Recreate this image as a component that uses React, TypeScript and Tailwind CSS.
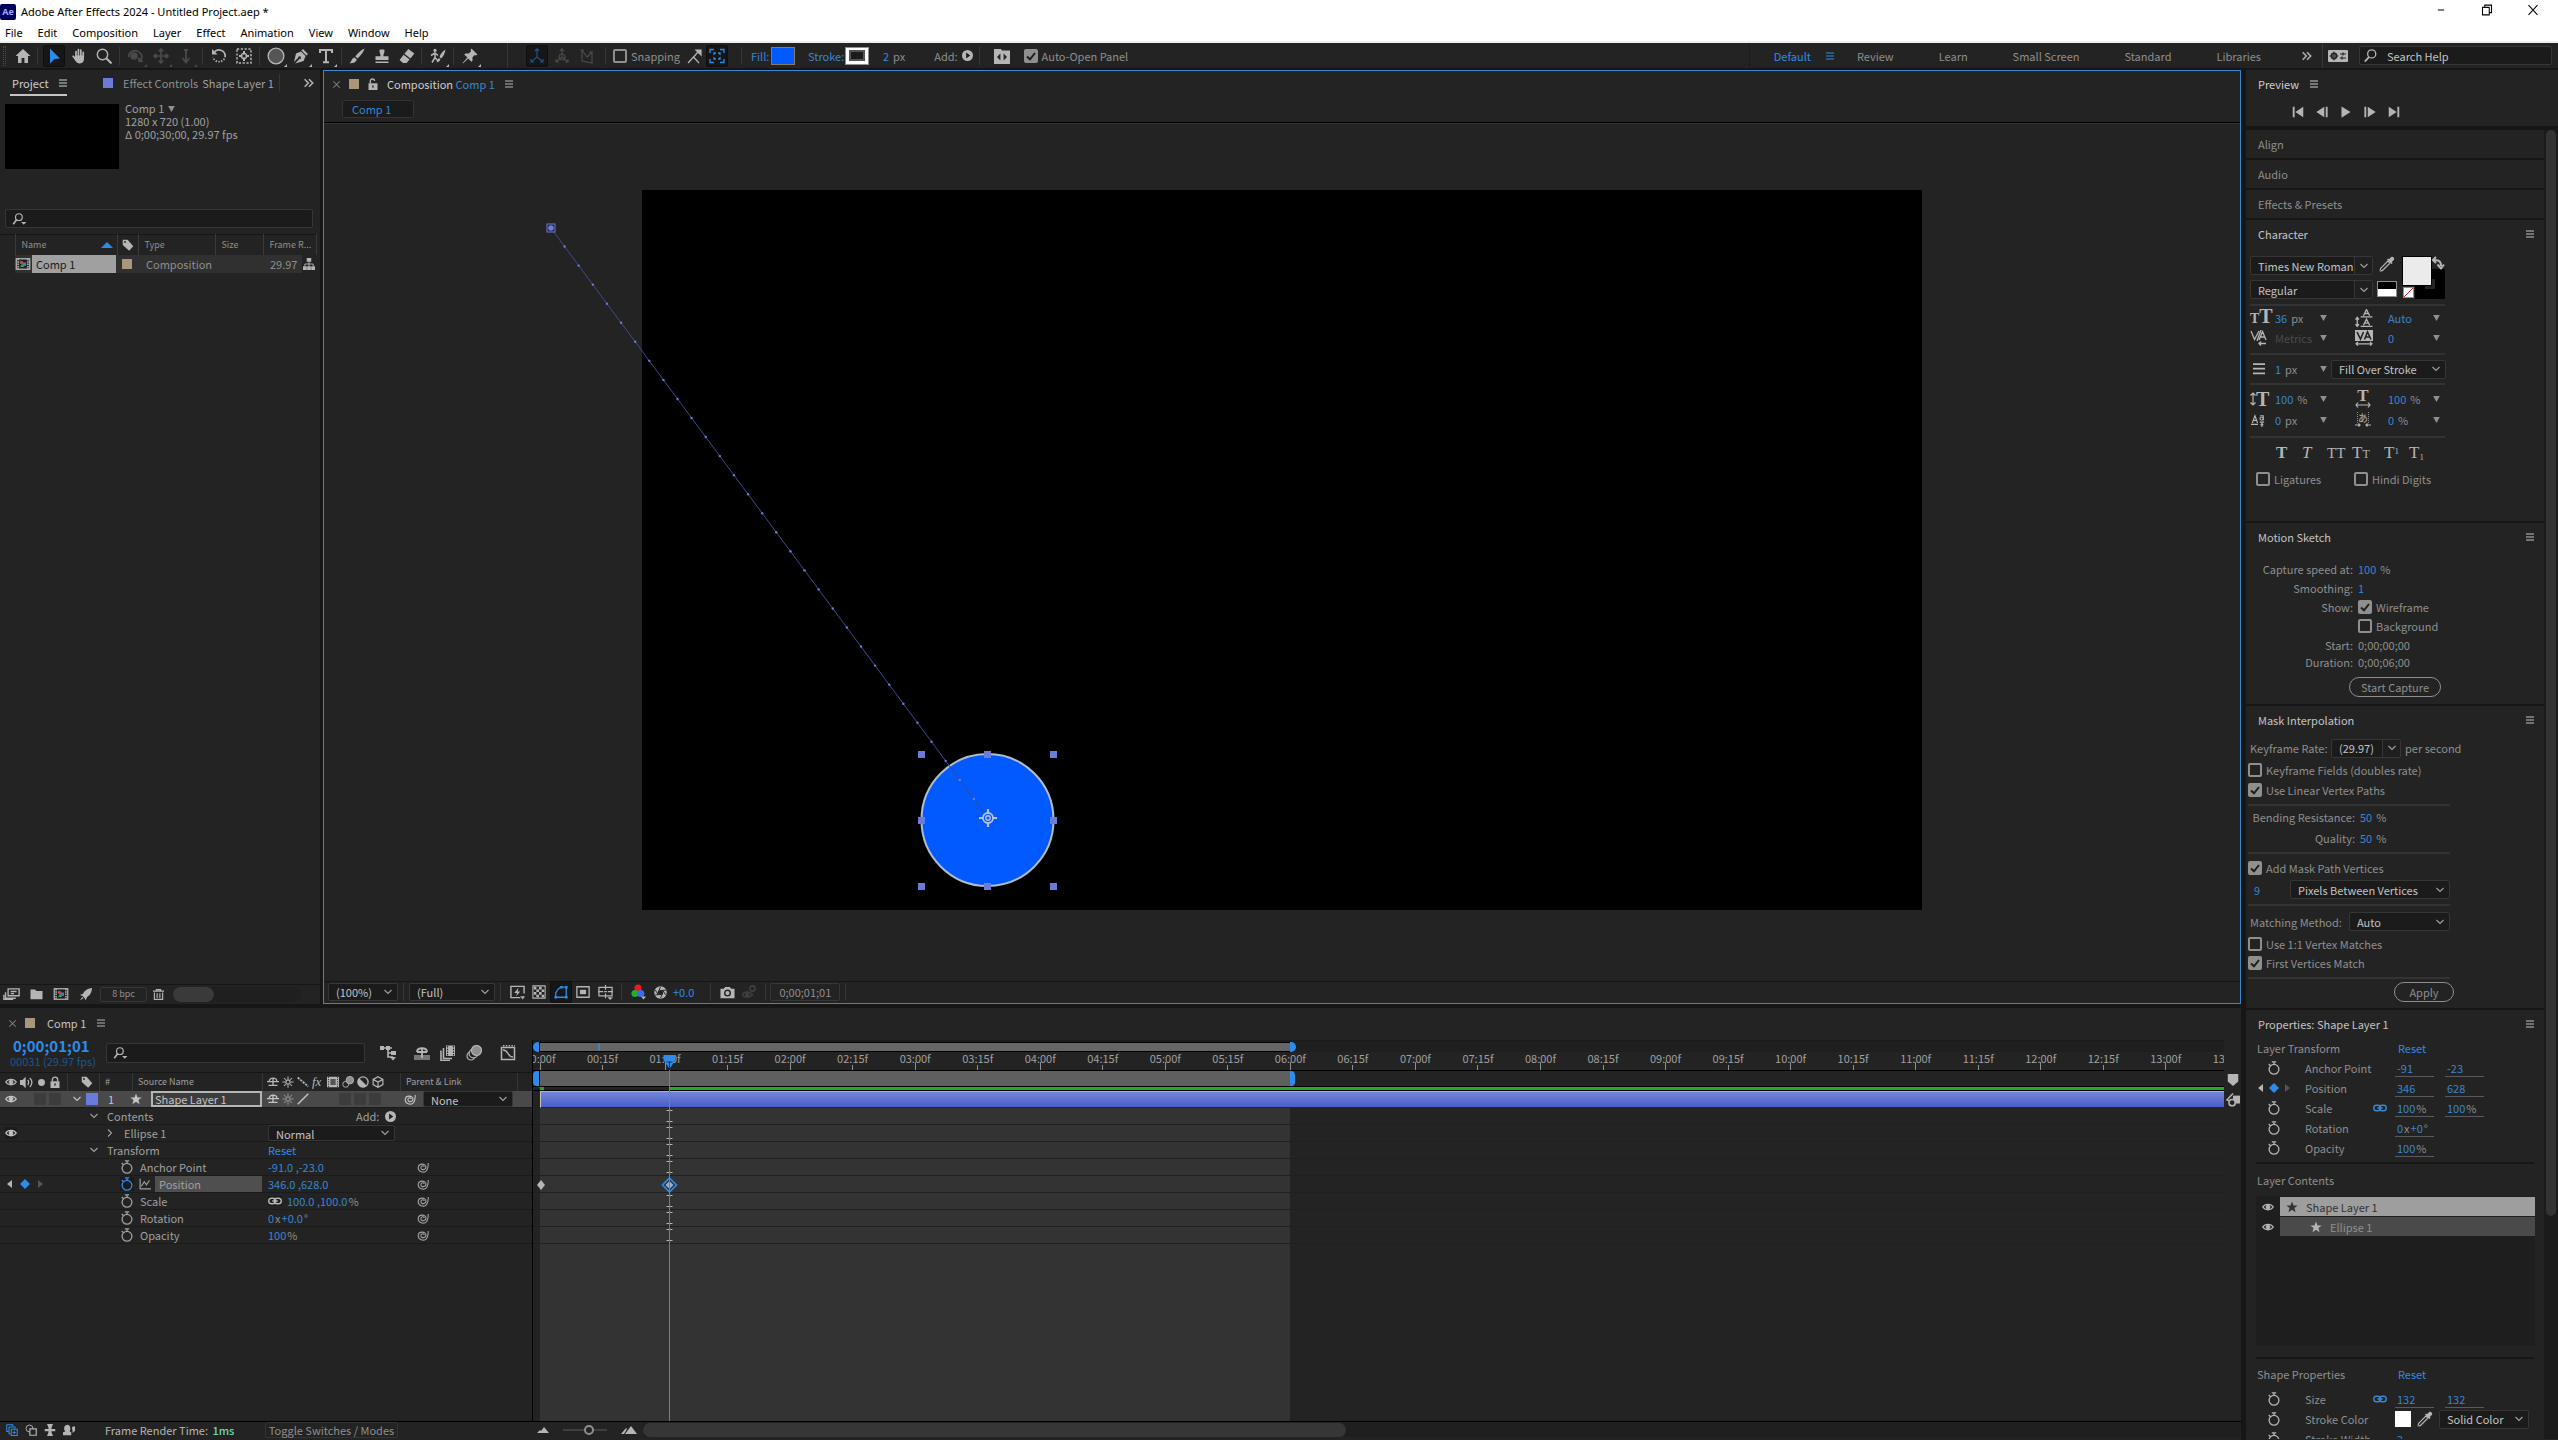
import type { ReactNode } from 'react';

const SECOND = 125.06;
const ORIGIN = 7;
const PLAYHEAD = ORIGIN + SECOND * (31 / 30);

function Svg({ className = 'size-4', box = '0 0 16 16', children }: { className?: string; box?: string; children: ReactNode }) {
  return (
    <svg
      viewBox={box}
      className={`shrink-0 ${className}`}
      fill="none"
      stroke="currentColor"
      strokeWidth="1.2"
      aria-hidden="true"
    >
      {children}
    </svg>
  );
}

function MenuIcon() {
  return (
    <Svg className="size-2">
      <path d="M0 2H16M0 8H16M0 14H16" strokeWidth="2" />
    </Svg>
  );
}

function Chevron({ className = 'size-2' }: { className?: string }) {
  return (
    <Svg className={className}>
      <path d="M1 4L8 11L15 4" strokeWidth="2.2" />
    </Svg>
  );
}

function Stopwatch({ className = 'size-[14px]' }: { className?: string }) {
  return (
    <Svg className={className}>
      <circle cx="8" cy="9.5" r="5.6" strokeWidth="1.5" />
      <path d="M5.5 1H10.5M8 1V4M2 3.5L4 5.5" strokeWidth="1.5" />
    </Svg>
  );
}

function PickWhip() {
  return (
    <Svg className="size-3">
      <path d="M9.5 8C9.5 5.6 5.2 5.8 5.2 9C5.2 12.6 11.8 12.4 12 8C12 3 2 2.6 1.6 9C1.6 14.4 8.6 16.4 12 13.4C14.6 11 15 8 15 2.5" strokeWidth="1.5" />
    </Svg>
  );
}

function Eye() {
  return (
    <Svg className="h-3 w-3">
      <path d="M1 8C4 3.2 12 3.2 15 8C12 12.8 4 12.8 1 8Z" strokeWidth="1.8" />
      <circle cx="8" cy="8" r="2.6" fill="currentColor" />
    </Svg>
  );
}

function Star({ className = 'size-3' }: { className?: string }) {
  return (
    <Svg className={className}>
      <path d="M8 0.5L10 6H15.6L11.2 9.4L12.8 15L8 11.6L3.2 15L4.8 9.4L0.4 6H6Z" fill="currentColor" stroke="none" />
    </Svg>
  );
}

function Tag() {
  return (
    <Svg className="size-3">
      <path d="M1 1H7.5L15 9.5L9.5 15.5L1 8Z" fill="currentColor" stroke="none" />
      <circle cx="4" cy="4" r="1.2" fill="#232323" stroke="none" />
    </Svg>
  );
}

function CompIcon() {
  return (
    <Svg className="h-3 w-4" box="0 0 20 16">
      <rect x="1" y="1" width="18" height="14" stroke="#b8b8b8" strokeWidth="1.6" />
      <path d="M3.5 1V15M16.5 1V15" stroke="#b8b8b8" strokeWidth="2" strokeDasharray="2 1.2" />
      <rect x="5.5" y="3" width="9" height="10" fill="#1d1d1d" stroke="none" />
      <circle cx="8" cy="6" r="2.3" fill="#d0433f" stroke="none" />
      <rect x="9.5" y="6" width="4.5" height="4.5" fill="#3f7fd0" stroke="none" />
      <path d="M6 12L8.8 7.6L11.5 12Z" fill="#3fa05c" stroke="none" />
    </Svg>
  );
}

function Link() {
  return (
    <Svg className="h-[10px] w-[14px]" box="0 0 20 12">
      <rect x="1" y="2" width="10" height="8" rx="4" strokeWidth="2" />
      <rect x="9" y="2" width="10" height="8" rx="4" strokeWidth="2" />
      <path d="M6 6H14" strokeWidth="2" />
    </Svg>
  );
}

function SearchIcon() {
  return (
    <Svg className="h-3 w-4" box="0 0 20 16">
      <circle cx="8.5" cy="5.5" r="4.5" strokeWidth="1.6" />
      <path d="M5.4 9L1 15" strokeWidth="2.2" />
      <path d="M11.5 12H18.5L15 15.5Z" fill="currentColor" stroke="none" />
    </Svg>
  );
}

function AddIcon() {
  return (
    <Svg className="size-[11px]">
      <circle cx="8" cy="8" r="8" fill="#b5b5b5" stroke="none" />
      <path d="M6 3.5L12 8L6 12.5Z" fill="#1d1d1d" stroke="none" />
    </Svg>
  );
}

function Eyedropper() {
  return (
    <Svg>
      <path d="M9.5 5.5L11 7L4 14C3 15 1 15 1.2 14.8C1 15 1.4 12.5 2.2 11.8L8.8 5Z" />
      <path d="M8 3.5L12.5 8L13.6 6.9L12.8 6L15 3.8C16 2.4 13.8 0 12.2 1L10 3.2L9.2 2.4Z" fill="currentColor" stroke="none" />
    </Svg>
  );
}

function Sep({ className = '' }: { className?: string }) {
  return <span className={`h-[18px] w-px shrink-0 bg-[#363636] ${className}`} />;
}

function Caret() {
  return (
    <Svg className="h-1.5 w-[7px]" box="0 0 10 9">
      <path d="M0 0H10L5 9Z" fill="#8f8f8f" stroke="none" />
    </Svg>
  );
}

function Check({ label, checked = false, className = '' }: { label: string; checked?: boolean; className?: string }) {
  return (
    <label className={`flex h-4 items-center gap-1 whitespace-nowrap ${className}`}>
      <span className="relative size-3.5 shrink-0">
        <input
          type="checkbox"
          defaultChecked={checked}
          className="peer block size-3.5 appearance-none rounded-[2px] border-2 border-[#8f8f8f] checked:bg-[#8f8f8f]"
        />
        <svg viewBox="0 0 14 14" className="pointer-events-none absolute inset-0 hidden peer-checked:block" aria-hidden="true">
          <path d="M3 7.5L6 10.3L11 4" fill="none" stroke="#1d1d1d" strokeWidth="2" />
        </svg>
      </span>
      {label}
    </label>
  );
}

function Select({ value, label, className = 'h-[19px]', split = false }: { value: string; label: string; className?: string; split?: boolean }) {
  return (
    <span className={`relative block shrink-0 ${className}`}>
      <select
        aria-label={label}
        className="block h-full w-full appearance-none rounded-[2px] border border-[#363636] bg-[#1b1b1b] pl-[7px] text-[#c4c4c4]"
      >
        <option>{value}</option>
      </select>
      <span
        className={`pointer-events-none absolute inset-y-px right-px flex w-[18px] items-center justify-center text-[#a0a0a0] ${
          split ? 'border-l border-[#363636] bg-[#1f1f1f]' : ''
        }`}
      >
        <Chevron />
      </span>
    </span>
  );
}

type ToolProps = {
  name: string;
  children: ReactNode;
  active?: boolean;
  dim?: boolean;
  corner?: boolean;
  width?: string;
};

function Tool({ name, children, active = false, dim = false, corner = false, width = 'w-[25px]' }: ToolProps) {
  return (
    <span className={`flex shrink-0 justify-center ${width}`}>
      <button
        aria-label={name}
        className={`relative flex h-[22px] w-[22px] items-center justify-center rounded-[2px] ${
          active ? 'border border-[#0f0f0f] bg-[#161616] text-[#2d8ceb]' : dim ? 'text-[#4a4a4a]' : 'text-[#b5b5b5]'
        }`}
      >
        {children}
        {corner && (
          <svg viewBox="0 0 4 4" className="absolute right-0 bottom-0 size-[3px]" aria-hidden="true">
            <path d="M4 0V4H0Z" fill="currentColor" />
          </svg>
        )}
      </button>
    </span>
  );
}

function TitleBar() {
  const menus = ['File', 'Edit', 'Composition', 'Layer', 'Effect', 'Animation', 'View', 'Window', 'Help'];

  return (
    <header className="shrink-0 bg-white font-['Noto_Sans'] text-[11px] text-black">
      <div className="flex h-6 items-center">
        <span className="flex size-4 items-center justify-center rounded-[2px] bg-[#00005b] text-[9px] font-bold text-[#a6a6ff]">
          Ae
        </span>
        <h1 className="ml-[5px]">Adobe After Effects 2024 - Untitled Project.aep *</h1>
        <div className="ml-auto flex items-center gap-[30px] pr-[17px] pb-1">
          <button aria-label="Minimize">
            <Svg className="h-2.5 w-4">
              <path d="M3 8H13" strokeWidth="1.6" />
            </Svg>
          </button>
          <button aria-label="Restore">
            <Svg className="h-3 w-4">
              <path d="M2 4.5H11V14.5H2ZM5 4.5V1.5H14V11.5H11" strokeWidth="1.4" />
            </Svg>
          </button>
          <button aria-label="Close">
            <Svg className="h-3 w-4">
              <path d="M2 1.5L14 14.5M14 1.5L2 14.5" strokeWidth="1.4" />
            </Svg>
          </button>
        </div>
      </div>
      <nav className="flex h-[19px] items-center gap-[15px] border-b-2 border-[#eef0ee] px-[5px]">
        {menus.map((item) => (
          <button key={item}>{item}</button>
        ))}
      </nav>
    </header>
  );
}

function ToolBar() {
  return (
    <div className="flex h-[25px] shrink-0 items-center bg-[#232323]">
      <span className="ml-[3px] h-5 w-[3px] border-x border-dotted border-[#4a4a4a]" />
      <span className="ml-1 flex">
        <Tool name="Home">
          <Svg>
            <path d="M8 1L0.5 8H3V15H6.6V10H9.4V15H13V8H15.5Z" fill="currentColor" stroke="none" />
          </Svg>
        </Tool>
      </span>
      <Sep className="ml-0.5" />
      <span className="flex px-[3px]">
        <Tool name="Selection" active>
          <Svg>
            <path d="M4 0.5L14 10.5L8.6 11L4 15.5Z" fill="currentColor" stroke="none" />
          </Svg>
        </Tool>
        <Tool name="Hand">
          <Svg>
            <path d="M5 9V3.6M7.4 8V1.6M9.8 8V2M12.2 9V4.4" strokeWidth="1.7" strokeLinecap="round" />
            <path d="M4.1 7.5H13V11C13 13.6 11.4 15.4 8.8 15.4C6.4 15.4 5.2 14.2 4 12.2L1 8C1.8 6.8 3.2 7.6 4.1 9Z" fill="currentColor" stroke="none" />
          </Svg>
        </Tool>
        <Tool name="Zoom">
          <Svg>
            <circle cx="6.5" cy="6.5" r="5.2" strokeWidth="1.4" />
            <path d="M10.5 10.5L15.5 15.5" strokeWidth="2" />
          </Svg>
        </Tool>
      </span>
      <Sep />
      <span className="flex px-[3px]">
        <Tool name="Orbit" dim corner>
          <Svg>
            <circle cx="6" cy="8" r="3.2" fill="currentColor" />
            <path d="M1 9C-0.5 5 6 1 10 3.4C15 6 15 11 11 13.5M11 13.5L11 9.5M11 13.5L15 13" strokeWidth="1.6" />
          </Svg>
        </Tool>
        <Tool name="Pan" dim corner>
          <Svg>
            <path d="M8 2V14M2 8H14M5.8 3.5L8 1L10.2 3.5M5.8 12.5L8 15L10.2 12.5M3.5 5.8L1 8L3.5 10.2M12.5 5.8L15 8L12.5 10.2" strokeWidth="1.6" />
          </Svg>
        </Tool>
        <Tool name="Dolly" dim corner>
          <Svg>
            <path d="M8 1V13M4.5 10L8 14.5L11.5 10M6 2H10" strokeWidth="1.8" />
          </Svg>
        </Tool>
      </span>
      <Sep className="ml-px" />
      <span className="flex px-[3px]">
        <Tool name="Rotation">
          <Svg>
            <path d="M3 4.5A6.2 6.2 0 0 1 14.2 8" strokeWidth="1.7" />
            <path d="M14.2 8A6.2 6.2 0 0 1 2 9" strokeWidth="1.7" strokeDasharray="1.4 1.4" />
            <path d="M1 1V6.5H6.5Z" fill="currentColor" stroke="none" />
          </Svg>
        </Tool>
        <Tool name="Pan Behind">
          <Svg>
            <rect x="1" y="1" width="14" height="14" strokeWidth="1.5" strokeDasharray="2.2 1.6" />
            <path d="M8 3V13M3 8H13" strokeWidth="2" strokeDasharray="3.4 3.2" />
            <circle cx="8" cy="8" r="2.6" />
          </Svg>
        </Tool>
      </span>
      <Sep />
      <span className="flex px-[3px]">
        <Tool name="Ellipse" corner>
          <Svg className="size-[18px]">
            <circle cx="8" cy="8" r="7" fill="#555555" />
          </Svg>
        </Tool>
        <Tool name="Pen" corner>
          <Svg>
            <path d="M10 1L15 6L13.4 7.6L8.4 2.6ZM8 3.4L12.6 8L10.6 13L2.2 15.4L6.4 11A1.4 1.4 0 1 0 5.2 9.8L1 14L3 5.4Z" fill="currentColor" stroke="none" />
          </Svg>
        </Tool>
        <Tool name="Type" corner>
          <Svg>
            <path d="M2 5V2H14V5M8 2V14M5 14.2H11" strokeWidth="2" />
          </Svg>
        </Tool>
      </span>
      <Sep />
      <span className="flex px-0.5">
        <Tool name="Brush">
          <Svg>
            <path d="M15.5 0.5C12 2 8 6 6.4 8.6L8.6 10.4C11 8 14.6 4.4 15.5 0.5Z" fill="currentColor" stroke="none" />
            <path d="M5.6 9.4L7.8 11.4C7.4 14 4.4 15.6 0.5 15.2C2.6 14 2.4 10 5.6 9.4Z" fill="currentColor" stroke="none" />
          </Svg>
        </Tool>
        <Tool name="Clone Stamp">
          <Svg>
            <path d="M6 1.5H10C11.5 3.5 9.4 5.4 9.4 8.2H14.5V12H1.5V8.2H6.6C6.6 5.4 4.5 3.5 6 1.5ZM1.5 13.4H14.5V15H1.5Z" fill="currentColor" stroke="none" />
          </Svg>
        </Tool>
        <Tool name="Eraser">
          <Svg>
            <path d="M9.4 1L15.4 5.6L11.4 10.4L5.4 5.8ZM4.6 6.8L10.6 11.4L7.6 15H4L0.6 12Z" fill="currentColor" stroke="none" />
          </Svg>
        </Tool>
      </span>
      <Sep />
      <span className="flex px-[3px]">
        <Tool name="Roto Brush" corner>
          <Svg>
            <circle cx="5" cy="2.4" r="1.6" fill="currentColor" stroke="none" />
            <path d="M5 4.5V9.5L2 14.5M5 9.5L8 13M1 7.5L5 5L8 7.5" strokeWidth="1.5" />
            <path d="M15.5 1.5C12.5 3 10.5 6 9.5 9L11 10.5C13.5 8.5 15 5 15.5 1.5ZM9 10L10.4 11.6C9.6 13.6 8 14.4 6.4 14.2C7.8 13 7.6 10.6 9 10Z" fill="currentColor" stroke="none" />
          </Svg>
        </Tool>
      </span>
      <Sep />
      <span className="flex px-[3px]">
        <Tool name="Puppet Pin" corner>
          <Svg>
            <path d="M9.4 0.5L15.5 6.6L13.8 7.4L12.6 7L10.4 9.4L10.6 12.6L9.4 13.8L6.2 10.4L1 15.4L0.6 15L5.4 9.6L2.2 6.6L3.4 5.4L6.6 5.6L9 3.4L8.6 2.2Z" fill="currentColor" stroke="none" />
          </Svg>
        </Tool>
      </span>
      <Sep className="ml-[22px] h-[25px] bg-[#1b1b1b]" />
      <span className="ml-4 flex">
        <Tool name="Local Axis" active>
          <Svg className="size-4 text-[#1d5288]">
            <path d="M8 1V9L2 14M8 9L14 14M6 3L8 0.8L10 3M2 11V14H5M14 11V14H11" />
          </Svg>
        </Tool>
        <Tool name="World Axis" dim>
          <Svg>
            <path d="M8 1V9L2 14M8 9L14 14M6 3L8 0.8L10 3M2 11V14H5M14 11V14H11" />
            <circle cx="8" cy="9" r="3" />
          </Svg>
        </Tool>
        <Tool name="View Axis" dim>
          <Svg>
            <path d="M3 2V13L13 15V4L8 9L3 2M13 4L10 4M1 2H5" />
          </Svg>
        </Tool>
      </span>
      <Sep className="ml-1.5" />
      <Check label="Snapping" className="ml-[7px] w-[66px]" />
      <span className="ml-[7px] flex text-[#b5b5b5]">
        <Svg>
          <path d="M2 15L7.5 9L13 15M7.5 9L12 4" />
          <path d="M10 2H15V7Z" fill="currentColor" />
        </Svg>
      </span>
      <span className="ml-0.5 flex">
        <Tool name="Snap Features" active>
          <Svg>
            <path d="M1 5V1.5H5M11 1.5H15V5M15 11V14.5H11M5 14.5H1V11M5 7V5H7M9 5H11V7M11 9V11H9M7 11H5V9" strokeWidth="1.3" />
          </Svg>
        </Tool>
      </span>
      <Sep className="ml-3" />
      <button className="ml-[9px] w-5 text-left text-[#3a86cf]">Fill:</button>
      <span className="h-[18px] w-6 border border-[#8a7a60] bg-[#005aff]" />
      <button className="ml-[13px] w-[37px] text-left text-[#3a86cf]">Stroke:</button>
      <span className="flex h-[18px] w-6 items-center justify-center border border-[#8f8f8f] bg-white">
        <span className="h-[11px] w-4 border-2 border-[#555555] bg-[#1b1b1b]" />
      </span>
      <button className="ml-3.5 text-[#2d8ceb]">2</button>
      <span className="ml-1">px</span>
      <span className="ml-[29px] mr-1">Add:</span>
      <button aria-label="Add shape item">
        <AddIcon />
      </button>
      <Sep className="ml-1.5" />
      <button aria-label="Toggle panel" className="ml-3.5 text-[#b5b5b5]">
        <Svg>
          <path d="M0 1H7L8 2.5H16V16H0Z" fill="currentColor" stroke="none" />
          <path d="M6.4 5.5V12.5L3 9ZM9.6 5.5V12.5L13 9Z" fill="#232323" stroke="none" />
        </Svg>
      </button>
      <Check label="Auto-Open Panel" checked className="ml-3.5" />
      <nav className="ml-auto flex h-full items-center border-l border-[#1b1b1b] pl-6">
        <button className="text-[#2d8ceb]">Default</button>
        <button aria-label="Workspace menu" className="mx-[15px] text-[#2d8ceb]">
          <MenuIcon />
        </button>
        <span className="ml-2 flex gap-[45px]">
          <button>Review</button>
          <button>Learn</button>
          <button>Small Screen</button>
          <button>Standard</button>
          <button>Libraries</button>
        </span>
        <button aria-label="More workspaces" className="ml-[41px] text-[#b5b5b5]">
          <Svg className="size-2.5">
            <path d="M1 2L7 8L1 14M8 2L14 8L8 14" strokeWidth="2.4" />
          </Svg>
        </button>
      </nav>
      <Sep className="ml-2.5 h-[25px]" />
      <button aria-label="Workspace settings" className="ml-[5px] text-[#b5b5b5]">
        <Svg className="h-3 w-5" box="0 0 20 12">
          <rect width="20" height="12" rx="1" fill="currentColor" stroke="none" />
          <circle cx="6" cy="6" r="2.6" stroke="#232323" strokeWidth="1.6" />
          <path d="M6 1.6V10.4M1.6 6H10.4" stroke="#232323" strokeWidth="1" />
          <path d="M12 4H18M12 8H18M15 2.6V5.4M14 6.6V9.4" stroke="#232323" />
        </Svg>
      </button>
      <label className="mr-1.5 ml-[11px] flex h-[19px] w-[193px] items-center gap-2.5 rounded-[2px] border border-[#363636] bg-[#1b1b1b] pl-1 text-[#b5b5b5]">
        <Svg className="size-[13px]">
          <circle cx="9.5" cy="6" r="5" strokeWidth="1.6" />
          <path d="M6 10L1 15.5" strokeWidth="2.2" />
        </Svg>
        <input aria-label="Search Help" placeholder="Search Help" className="w-full bg-transparent placeholder:text-[#c4c4c4]" />
      </label>
    </div>
  );
}

function ProjectPanel() {
  return (
    <section className="flex w-[320px] shrink-0 flex-col bg-[#232323]">
      <div className="flex h-[26px] shrink-0 items-center pl-[10px]">
        <button className="flex h-full w-[57px] items-center justify-between border-b-2 border-[#c4c4c4] pt-0.5 pl-0.5 text-[#d0d0d0]">
          Project
          <MenuIcon />
        </button>
        <button className="ml-9 flex items-center">
          <span className="mr-2.5 size-2.5 bg-[#6a7bdc]" />
          Effect Controls <span className="ml-1 text-[#a0a0a0]">Shape Layer 1</span>
        </button>
        <Sep className="ml-auto bg-[#1b1b1b]" />
        <button aria-label="More panels" className="mr-[6px] ml-6 text-[#b5b5b5]">
          <Svg className="size-2.5">
            <path d="M1 2L7 8L1 14M8 2L14 8L8 14" strokeWidth="2.4" />
          </Svg>
        </button>
      </div>
      <div className="mt-2 flex gap-1.5 pl-[5px]">
        <span className="h-[65px] w-[114px] bg-black" />
        <div className="-mt-0.5 leading-[13px] text-[#a0a0a0]">
          <button className="flex items-center gap-1 leading-[13px]">
            Comp 1 <Caret />
          </button>
          <p>1280 x 720 (1.00)</p>
          <p>Δ 0;00;30;00, 29.97 fps</p>
        </div>
      </div>
      <label className="mx-[5px] mt-10 flex h-[19px] w-[308px] shrink-0 items-center rounded-[2px] border border-[#363636] bg-[#1b1b1b] pl-1.5 text-[#b5b5b5]">
        <SearchIcon />
        <input aria-label="Search project" className="w-full bg-transparent pl-1" />
      </label>
      <table className="mt-1.5 w-[316px] table-fixed border-t border-[#161616]">
        <thead>
          <tr className="h-5 text-left text-[9px] leading-5 whitespace-nowrap">
            <th className="w-[15px]" />
            <th className="w-[102px] border-l border-[#3a3a3a] pl-1.5 font-normal">
              <span className="flex items-center justify-between pr-1">
                Name
                <Svg className="h-1.5 w-3" box="0 0 12 6">
                  <path d="M6 0L12 6H0Z" fill="#2d8ceb" stroke="none" />
                </Svg>
              </span>
            </th>
            <th className="w-[21px] border-l border-[#3a3a3a] pl-1 text-[#b5b5b5]">
              <Tag />
            </th>
            <th className="w-[77px] border-l border-[#3a3a3a] pl-1.5 font-normal">Type</th>
            <th className="w-[48px] border-l border-[#3a3a3a] pl-1.5 font-normal">Size</th>
            <th className="w-[53px] border-x border-[#3a3a3a] pl-1.5 font-normal">Frame R...</th>
          </tr>
        </thead>
        <tbody>
          <tr className="h-[18px] bg-[#303030] leading-[18px]">
            <td className="bg-[#232323]" />
            <td>
              <span className="flex items-center gap-px">
                <CompIcon />
                <span className="mr-px h-[18px] flex-1 bg-[#a0a0a0] pl-1 text-[#1b1b1b]">Comp 1</span>
              </span>
            </td>
            <td className="pl-[5px]">
              <span className="block size-2.5 bg-[#a8977a]" />
            </td>
            <td colSpan={2} className="pl-2">Composition</td>
            <td className="pl-[7px]">
              <span className="flex items-center justify-between">
                29.97
                <span className="bg-[#232323] px-px text-[#b5b5b5]">
                  <Svg className="h-[18px] w-3">
                    <path d="M5 0H11V5H5ZM0 11H5V16H0ZM11 11H16V16H11ZM5.5 11H10.5V16H5.5Z" fill="currentColor" stroke="none" />
                    <path d="M8 5V11M2.5 11V8H13.5V11" />
                  </Svg>
                </span>
              </span>
            </td>
          </tr>
        </tbody>
      </table>
      <div className="mt-auto mb-px flex h-[19px] shrink-0 items-center border-t border-[#161616] pl-[3px] text-[#b5b5b5]">
        <button aria-label="Interpret footage" className="w-[27px]">
          <Svg className="h-3 w-[17px]" box="0 0 20 14">
            <path d="M6 1H19V9H6ZM9 4H16M9 6.5H13M3 5V12H15M1 8V13.5H12" strokeWidth="1.6" />
          </Svg>
        </button>
        <button aria-label="New folder" className="w-[23px]">
          <Svg className="h-3 w-[13px]">
            <path d="M0 2H6L8 4H16V15H0Z" fill="currentColor" stroke="none" />
          </Svg>
        </button>
        <button aria-label="New composition" className="w-[26px]">
          <CompIcon />
        </button>
        <button aria-label="Project settings" className="w-[21px]">
          <Svg className="size-[13px]">
            <path d="M16 0C10 1 7 3 5 7L1 8.5L4 9.5L7 12.5L8 15.5L10 11C13.5 9 15.5 6 16 0ZM4 11L1 15L5.5 12.5Z" fill="currentColor" stroke="none" />
          </Svg>
        </button>
        <button className="h-[15px] w-[47px] rounded-[2px] border border-[#363636] text-[9px] leading-3 text-[#8f8f8f]">8 bpc</button>
        <button aria-label="Delete" className="ml-[6px]">
          <Svg className="h-[13px] w-[11px]">
            <path d="M0 3H16M5 3V1H11V3M2 5V15H14V5M6 6V13M10 6V13" strokeWidth="1.7" />
          </Svg>
        </button>
        <span className="ml-[9px] h-[15px] w-[128px] rounded-full bg-[#1f1f1f]">
          <span className="block h-[15px] w-[41px] rounded-full bg-[#3a3a3a]" />
        </span>
      </div>
    </section>
  );
}

function CompositionCanvas() {
  const start = { x: -91.5, y: 37.5 };
  const end = { x: 346, y: 628 };
  const frames = Array.from({ length: 30 }, (_, i) => (i + 1) / 31);
  const handles = [
    [279, 565], [345, 565], [411, 565],
    [279, 631], [411, 631],
    [279, 697], [345, 697], [411, 697],
  ];

  return (
    <div className="flex min-h-0 flex-1 items-center justify-center overflow-hidden border-t border-[#333333] pb-1.5">
      <svg viewBox="0 0 1280 720" className="h-[720px] w-[1280px] shrink-0 overflow-visible bg-black">
        <circle cx="345.5" cy="630" r="66" fill="#005aff" stroke="#b4bccc" strokeWidth="2" />
        <line x1={start.x} y1={start.y} x2={end.x} y2={end.y} stroke="#3d4890" strokeWidth="1" />
        {frames.map((t) => (
          <circle key={t} cx={start.x + (end.x - start.x) * t} cy={start.y + (end.y - start.y) * t} r="1.2" fill="#6a7bdc" />
        ))}
        <rect x="-95" y="34" width="8" height="8" fill="#232323" stroke="#6a7bdc" />
        <circle cx="-91" cy="38" r="2.8" fill="#6a7bdc" />
        {handles.map(([x, y]) => (
          <rect key={`${x}-${y}`} x={x - 3} y={y - 4} width="7" height="7" fill="#6a7bdc" />
        ))}
        <g stroke="#b8c0e8" fill="none">
          <circle cx="346" cy="628" r="5" strokeWidth="1.8" />
          <circle cx="346" cy="628" r="2.2" strokeWidth="1.4" />
          <path d="M346 619V623M346 633V637M337 628H341M351 628H355" strokeWidth="2.2" />
        </g>
      </svg>
    </div>
  );
}

function CompositionPanel() {
  return (
    <section className="flex min-w-0 flex-1 flex-col border border-[#3a86cf] bg-[#232323]">
      <div className="flex h-[26px] shrink-0 items-center pl-[7px]">
        <button aria-label="Close composition" className="mr-2 w-2.5 text-center">×</button>
        <span className="size-2.5 bg-[#a8977a]" />
        <button aria-label="Lock" className="mx-[9px] text-[#b5b5b5]">
          <Svg className="h-3 w-2.5" box="0 0 12 16">
            <path d="M0 7H12V16H0Z" fill="currentColor" stroke="none" />
            <path d="M2.5 7V4C2.5 0.5 8 0.5 8 4" strokeWidth="1.8" />
            <path d="M6 9.5V13" stroke="#232323" strokeWidth="1.6" />
          </Svg>
        </button>
        <h2 className="text-[#d0d0d0]">
          Composition <span className="text-[#3a86cf]">Comp 1</span>
        </h2>
        <button aria-label="Panel menu" className="ml-2.5 text-[#b5b5b5]">
          <MenuIcon />
        </button>
      </div>
      <div className="flex h-[26px] shrink-0 items-center border-b border-black pb-0.5 pl-[18px]">
        <button className="h-[18px] w-[72px] rounded-[2px] border border-[#333333] bg-[#1b1b1b] pl-[9px] text-left leading-4 text-[#3a86cf]">
          Comp 1
        </button>
      </div>
      <CompositionCanvas />
      <div className="flex h-[22px] shrink-0 items-center border-t border-[#161616] pb-px pl-1 text-[#b5b5b5]">
        <Select value="(100%)" label="Magnification" className="h-[18px] w-[70px]" />
        <Sep className="mx-[5px]" />
        <Select value="(Full)" label="Resolution" className="h-[18px] w-[86px]" />
        <Sep className="mx-[5px]" />
        <Tool name="Fast previews" width="w-[22px]">
          <Svg className="size-[15px]">
            <path d="M11 13.5H1V1.5H15V9" strokeWidth="1.5" />
            <path d="M9 3L4.5 8.5H7.5L6.5 12L11 6.8H8.2Z" fill="currentColor" stroke="none" />
            <path d="M11 12H16L13.5 15.5Z" fill="currentColor" stroke="none" />
          </Svg>
        </Tool>
        <Tool name="Transparency grid" width="w-[22px]">
          <Svg className="size-[14px]">
            <path d="M1 1H15V15H1Z" />
            <path d="M2 2H5V5H2ZM8 2H11V5H8ZM5 5H8V8H5ZM11 5H14V8H11ZM2 8H5V11H2ZM8 8H11V11H8ZM5 11H8V14H5ZM11 11H14V14H11Z" fill="currentColor" stroke="none" />
          </Svg>
        </Tool>
        <Tool name="Mask visibility" width="w-[22px]" active>
          <Svg className="size-[14px]">
            <path d="M2 14V9C4 5 6 3 9 2.5H14V14Z" strokeWidth="1.5" />
            <path d="M0.5 12.5H3.5V15.5H0.5ZM12.5 12.5H15.5V15.5H12.5ZM12.5 1H15.5V4H12.5ZM7 1H10V4H7Z" fill="currentColor" stroke="none" />
          </Svg>
        </Tool>
        <Tool name="Region of interest" width="w-[22px]">
          <Svg className="size-[14px]">
            <path d="M1 2H15V14H1Z" strokeWidth="1.5" />
            <path d="M4.5 5.5H11.5V10.5H4.5Z" fill="currentColor" stroke="none" />
          </Svg>
        </Tool>
        <Tool name="Grid and guides" width="w-[22px]">
          <Svg className="size-[15px]">
            <path d="M1 2.5H15V11.5H1ZM8 0V5M8 9V14M0 7H5.5M10.5 7H16M6.5 7H9.5" strokeWidth="1.3" />
            <path d="M10 13H16L13 16Z" fill="currentColor" stroke="none" />
          </Svg>
        </Tool>
        <Sep className="ml-[5px]" />
        <button aria-label="Channels" className="ml-[9px]">
          <Svg>
            <circle cx="7" cy="4" r="3.6" fill="#f01818" stroke="none" />
            <circle cx="4" cy="9.5" r="3.6" fill="#1fb02c" stroke="none" />
            <circle cx="9.8" cy="9.5" r="3.6" fill="#3c6bf0" stroke="none" />
            <path d="M10 12.5H15L12.5 15.5Z" fill="currentColor" stroke="none" />
          </Svg>
        </button>
        <button aria-label="Reset exposure" className="ml-[7px]">
          <Svg className="size-[13px]">
            <circle cx="8" cy="8" r="5.4" strokeWidth="4.6" />
            <path d="M8 1L5 8M14.6 5L7.6 5.6M14.4 11L10.6 5M8 15L11 8M1.4 11L8.4 10.4M1.6 5L5.4 11" stroke="#232323" />
          </Svg>
        </button>
        <button className="ml-1.5 text-[#2d8ceb]">+0.0</button>
        <Sep className="ml-4" />
        <button aria-label="Take snapshot" className="ml-[9px]">
          <Svg className="size-[15px]">
            <path d="M0.5 4H4L5.5 2H10.5L12 4H15.5V14H0.5Z" fill="currentColor" stroke="none" />
            <circle cx="8" cy="8.6" r="3" fill="#b5b5b5" stroke="#232323" strokeWidth="1.5" />
          </Svg>
        </button>
        <button aria-label="Show snapshot" className="ml-[7px] text-[#404040]">
          <Svg className="size-[14px]">
            <path d="M0 11C3 7 9 7 12 11C9 15 3 15 0 11Z" strokeWidth="1.8" />
            <circle cx="6" cy="11" r="2" fill="currentColor" />
            <circle cx="12" cy="4" r="3" strokeWidth="1.8" />
          </Svg>
        </button>
        <Sep className="ml-[9px]" />
        <button className="ml-1 h-[18px] w-[70px] rounded-[2px] border border-[#363636] leading-4 text-[#8f8f8f]">0;00;01;01</button>
        <Sep className="ml-[5px]" />
      </div>
    </section>
  );
}

function Reset() {
  return <button className="text-[#2d8ceb]">Reset</button>;
}

function LayerRow({ lead = null, children, value = null, whip = false }: { lead?: ReactNode; children: ReactNode; value?: ReactNode; whip?: boolean }) {
  return (
    <div className="flex h-[17px] shrink-0 items-center border-b border-[#1b1b1b] text-[#a0a0a0]">
      <span className="flex w-[86px] shrink-0 items-center">{lead}</span>
      <span className="flex h-full w-[182px] shrink-0 items-center">{children}</span>
      <span className="flex w-[149px] shrink-0 items-center text-[#3a86cf]">{value}</span>
      {whip && (
        <button aria-label="Property pick whip">
          <PickWhip />
        </button>
      )}
    </div>
  );
}

function Unit({ children }: { children: ReactNode }) {
  return <span className="mx-px text-[#8f8f8f]">{children}</span>;
}

function PropertyLabel({ name }: { name: string }) {
  return (
    <span className="flex items-center gap-1.5 pl-[34px]">
      <Stopwatch />
      {name}
    </span>
  );
}

function LayerList() {
  return (
    <div className="flex w-[532px] shrink-0 flex-col">
      <div className="flex h-8 shrink-0 items-center pb-1.5">
        <div className="w-[100px] shrink-0 pl-[13px] leading-4">
          <p className="text-[15px] font-bold text-[#2d8ceb]">0;00;01;01</p>
          <p className="-ml-[3px] leading-[14px] text-[#1f568c]">00031 (29.97 fps)</p>
        </div>
        <label className="ml-[6px] flex h-5 w-[259px] items-center rounded-[2px] border border-[#363636] bg-[#1b1b1b] pl-1.5 text-[#b5b5b5]">
          <SearchIcon />
          <input aria-label="Search layers" className="w-full bg-transparent pl-1" />
        </label>
        <div className="ml-[15px] flex gap-[10px] text-[#b5b5b5]">
          <button aria-label="Mini flowchart" className="mr-2">
            <Svg>
              <path d="M1 3H8V8H13M8 3H12M8 8V12H13" strokeWidth="1.6" />
              <path d="M0 1H4V5H0ZM6 1H10V5H6ZM11 6H16V10H11ZM10 12H16L13 15.5Z" fill="currentColor" stroke="none" />
            </Svg>
          </button>
          <button aria-label="Hide shy layers">
            <Svg>
              <path d="M0 10H16V15H0Z" fill="#777777" stroke="none" />
              <path d="M3 7C3 2 13 2 13 7M3 7H13M8 3V13" strokeWidth="1.8" />
            </Svg>
          </button>
          <button aria-label="Frame blending">
            <Svg>
              <path d="M6 0.5H15V11H6Z" fill="currentColor" stroke="none" />
              <path d="M3.5 3V13.5H12M1 5.5V15.5H10" strokeWidth="1.6" />
              <path d="M7.5 1V11M13.5 1V11" stroke="#232323" strokeDasharray="1.5 1.2" />
            </Svg>
          </button>
          <button aria-label="Motion blur">
            <Svg>
              <circle cx="5" cy="11" r="4" />
              <circle cx="7.5" cy="8.5" r="4.4" fill="#232323" />
              <circle cx="10.5" cy="5.5" r="5" fill="#8f8f8f" />
            </Svg>
          </button>
          <button aria-label="Graph editor" className="ml-2">
            <Svg>
              <path d="M1.5 2.5H14.5V14.5H1.5ZM3 5C9 5 7 12 13 12" strokeWidth="1.5" />
              <path d="M3 0.8H15" strokeDasharray="1.4 1.4" strokeWidth="1.6" />
            </Svg>
          </button>
        </div>
      </div>
      <div className="flex h-[19px] shrink-0 items-center border-t border-[#161616] text-[9px] text-[#b5b5b5]">
        <span className="flex w-[67px] shrink-0 items-center gap-[3px] pl-[5px]">
          <Eye />
          <Svg className="size-[13px]">
            <path d="M0 5H3L7 1V15L3 11H0Z" fill="currentColor" stroke="none" />
            <path d="M9.5 5C11 6.5 11 9.5 9.5 11M12 2.5C15.5 5.5 15.5 10.5 12 13.5" strokeWidth="1.6" />
          </Svg>
          <Svg className="size-[11px]">
            <circle cx="8" cy="8" r="5" fill="currentColor" stroke="none" />
          </Svg>
          <Svg className="h-3 w-[10px]" box="0 0 12 16">
            <path d="M0 7H12V16H0Z" fill="currentColor" stroke="none" />
            <path d="M2.5 7V4.5C2.5 0.5 9.5 0.5 9.5 4.5V7" strokeWidth="1.8" />
            <path d="M6 9.5V13" stroke="#232323" strokeWidth="1.6" />
          </Svg>
        </span>
        <Sep className="h-[11px]" />
        <span className="flex w-[31px] shrink-0 justify-end pr-1.5">
          <Tag />
        </span>
        <Sep className="h-[11px]" />
        <span className="w-8 shrink-0 pl-[5px] text-[#a0a0a0]">#</span>
        <Sep className="h-[11px]" />
        <span className="w-[129px] shrink-0 pl-[5px] text-[#a0a0a0]">Source Name</span>
        <Sep className="h-[11px]" />
        <span className="flex w-[137px] shrink-0 items-center gap-[3px] pl-1">
          <Shy />
          <Sun />
          <Svg className="size-3">
            <path d="M1 2L15 14" strokeWidth="2.4" strokeDasharray="3 1.4" />
          </Svg>
          <i className="w-3 font-['Liberation_Serif'] text-[13px] leading-3">fx</i>
          <Svg className="size-3">
            <path d="M0 1H16V15H0Z" fill="currentColor" stroke="none" />
            <path d="M2 1V15M14 1V15" stroke="#232323" strokeDasharray="1.5 1.5" />
            <path d="M4.5 4H11.5V12H4.5Z" fill="#555555" stroke="none" />
          </Svg>
          <Svg className="size-3">
            <circle cx="5" cy="11" r="4" />
            <circle cx="10.5" cy="5.5" r="5" fill="#8f8f8f" />
          </Svg>
          <Svg className="size-3">
            <circle cx="8" cy="8" r="6.8" strokeWidth="1.8" />
            <path d="M3 3A7 7 0 0 0 13 13Z" fill="currentColor" stroke="none" />
          </Svg>
          <Svg className="size-3">
            <path d="M8 1L14.5 4.5V11.5L8 15L1.5 11.5V4.5ZM1.5 4.5L8 8L14.5 4.5M8 8V15" strokeWidth="1.6" />
          </Svg>
        </span>
        <Sep className="h-[11px]" />
        <span className="w-[116px] shrink-0 pl-[5px] text-[#a0a0a0]">Parent &amp; Link</span>
        <Sep className="h-[11px]" />
      </div>
      <div className="flex h-[17px] shrink-0 items-center border-b border-[#1b1b1b] bg-[#494949] text-[#c4c4c4]">
        <span className="flex w-[70px] shrink-0 items-center gap-[3px] pl-[5px]">
          <Eye />
          <span className="ml-[14px] size-3 bg-[#3c3c3c]" />
          <span className="size-3 bg-[#3c3c3c]" />
        </span>
        <span className="flex w-[81px] shrink-0 items-center pl-[3px]">
          <Chevron />
          <span className="mr-1 ml-[5px] size-3 bg-[#6a7bdc]" />
          <span className="w-7 pl-1.5">1</span>
          <Star />
        </span>
        <button className="h-4 w-[111px] shrink-0 border-2 border-[#b5b5b5] bg-[#3c3c3c] pl-0.5 text-left leading-3">Shape Layer 1</button>
        <span className="flex w-[142px] shrink-0 items-center gap-[3px] pl-[5px]">
          <Shy />
          <span className="text-[#8f8f8f]">
            <Sun />
          </span>
          <Svg className="size-3">
            <path d="M1 15L15 1" strokeWidth="2" />
          </Svg>
          <span className="ml-[27px] size-3 bg-[#3c3c3c]" />
          <span className="size-3 bg-[#3c3c3c]" />
          <span className="size-3 bg-[#3c3c3c]" />
        </span>
        <button aria-label="Parent pick whip" className="mr-[7px] w-3">
          <PickWhip />
        </button>
        <Select value="None" label="Parent" className="h-4 w-[90px]" />
      </div>
      <LayerRow
        value={
          <span className="flex items-center gap-[6px] pl-[88px] text-[#a0a0a0]">
            Add:
            <button aria-label="Add to contents">
              <AddIcon />
            </button>
          </span>
        }
      >
        <button className="flex items-center gap-[9px] pl-1">
          <Chevron />
          Contents
        </button>
      </LayerRow>
      <LayerRow
        lead={
          <span className="ml-[5px] bg-[#1b1b1b] text-[#c4c4c4]">
            <Eye />
          </span>
        }
        value={<Select value="Normal" label="Blending mode" className="h-4 w-[127px]" />}
      >
        <button className="flex items-center gap-[10px] pl-5">
          <Svg className="size-2">
            <path d="M4 1L11 8L4 15" strokeWidth="2.2" />
          </Svg>
          Ellipse 1
        </button>
      </LayerRow>
      <LayerRow value={<Reset />}>
        <button className="flex items-center gap-[9px] pl-1">
          <Chevron />
          Transform
        </button>
      </LayerRow>
      <LayerRow value="-91.0 ,-23.0" whip>
        <PropertyLabel name="Anchor Point" />
      </LayerRow>
      <LayerRow
        whip
        value="346.0 ,628.0"
        lead={
          <Svg className="ml-1.5 h-3 w-[38px]" box="0 0 38 12">
            <path d="M6 2V10L1 6Z" fill="#b5b5b5" stroke="none" />
            <path d="M19 1L24 6L19 11L14 6Z" fill="#2d8ceb" stroke="none" />
            <path d="M32 2V10L37 6Z" fill="#555555" stroke="none" />
          </Svg>
        }
      >
        <span className="flex h-full items-center pl-[34px]">
          <span className="bg-[#1b1b1b] text-[#2d8ceb]">
            <Stopwatch />
          </span>
          <Svg className="ml-[5px] size-3">
            <path d="M1.5 1V14.5H16M3 11L7 5L10 9L14 3" strokeWidth="1.6" />
          </Svg>
          <span className="ml-1 h-full w-[107px] bg-[#4f4f4f] pl-1 leading-4">Position</span>
        </span>
      </LayerRow>
      <LayerRow
        whip
        value={
          <span className="flex items-center">
            <span className="mr-[5px] bg-[#1b1b1b] text-[#b5b5b5]">
              <Link />
            </span>
            100.0 ,100.0 <Unit>%</Unit>
          </span>
        }
      >
        <PropertyLabel name="Scale" />
      </LayerRow>
      <LayerRow whip value={<span>0<Unit>x</Unit>+0.0<Unit>°</Unit></span>}>
        <PropertyLabel name="Rotation" />
      </LayerRow>
      <LayerRow whip value={<span>100<Unit>%</Unit></span>}>
        <PropertyLabel name="Opacity" />
      </LayerRow>
    </div>
  );
}

function Shy() {
  return (
    <Svg className="size-3">
      <path d="M3 7C3 1.5 13 1.5 13 7M0 7.5H16M8 3V12M2 12.5H14" strokeWidth="1.8" />
    </Svg>
  );
}

function Sun() {
  return (
    <Svg className="size-3">
      <circle cx="8" cy="8" r="2.8" strokeWidth="1.6" />
      <path d="M8 0.5V4M8 12V15.5M0.5 8H4M12 8H15.5M2.7 2.7L5 5M11 11L13.3 13.3M13.3 2.7L11 5M5 11L2.7 13.3" strokeWidth="1.4" />
    </Svg>
  );
}

function Track() {
  const marks = Array.from({ length: 28 }, (_, i) => ({
    left: ORIGIN + (i * SECOND) / 2,
    major: i % 2 === 0,
    label: `${String(Math.floor(i / 2)).padStart(2, '0')}:${i % 2 === 0 ? '00' : '15'}f`,
  }));
  const workWidth = SECOND * 6;

  return (
    <div className="relative flex min-w-0 flex-1 flex-col overflow-hidden border-l border-black">
      <div className="flex h-3 shrink-0 items-center border-t border-[#1b1b1b] bg-[#1f1f1f]">
        <span className="h-[10px] w-[7px] rounded-l-full border-r border-black bg-[#2d8ceb]" />
        <span className="flex h-[10px] border-y border-black bg-[#666666]" style={{ width: workWidth }}>
          <span className="ml-[58px] w-0.5 bg-[#4a7eb8]" />
        </span>
        <span className="h-[10px] w-1.5 rounded-r-full bg-[#2d8ceb]" />
      </div>
      <div className="relative h-[18px] shrink-0 text-[#a0a0a0]">
        {marks.map((m) => (
          <div key={m.label} className="absolute top-0 flex h-full w-10 -translate-x-1/2 justify-center" style={{ left: m.left }}>
            <span className="leading-3">{m.label}</span>
            <span className={`absolute bottom-0 w-px bg-[#8f8f8f] ${m.major ? 'h-2' : 'h-[5px]'}`} />
          </div>
        ))}
      </div>
      <div className="flex h-[17px] shrink-0 border-y border-black">
        <span className="w-[7px] rounded-l-[4px] border-r border-black bg-[#2d8ceb]" />
        <span className="bg-[#5f5f5f]" style={{ width: workWidth }} />
        <span className="w-[5px] rounded-r-[4px] bg-[#2d8ceb]" />
      </div>
      <div className="flex h-1 shrink-0 border-b border-black">
        <span className="ml-[7px] w-1 bg-[#22ac2e]" />
        <span className="flex-1 bg-[#22ac2e]" style={{ marginLeft: PLAYHEAD - ORIGIN - 4 }} />
      </div>
      <div className="flex min-h-0 flex-1 flex-col pl-[7px]">
        <div className="h-[17px] shrink-0 border-t border-b border-l border-t-[#a4aee6] border-b-[#1a2458] border-l-[#c4c4c4] bg-linear-to-b from-[#7585d8] to-[#4a5cc8]" />
        <div className="flex-1 bg-[#333333]" style={{ width: workWidth }} />
      </div>
      {/* row lines, keyframes and playhead sit on top of the track */}
      <div className="absolute inset-x-0 top-[68px] flex flex-col">
        {Array.from({ length: 8 }, (_, i) => (
          <span key={i} className="h-[17px] border-b border-[#202020]" />
        ))}
      </div>
      <svg className="absolute inset-0 h-full w-full" aria-hidden="true">
        <path d="M8 140L12 145L8 150L4 145Z" fill="#b5b5b5" />
        <g transform={`translate(${Math.round(PLAYHEAD) + 0.5} 0)`}>
          {[76, 93, 110, 127, 161, 178, 195].map((y) => (
            <path key={y} d={`M-3 ${y - 5.5}H3M-3 ${y + 5.5}H3M0 ${y - 5}V${y + 5}`} stroke="#b5b5b5" strokeWidth="1" fill="none" />
          ))}
          <path d="M0 138L7 145L0 152L-7 145Z" fill="#2a3440" stroke="#2d8ceb" strokeWidth="1.6" />
          <path d="M0 141L4 145L0 149L-4 145Z" fill="#9ab0c8" />
          <path d="M0 30V400" stroke="#3a8ee0" />
          <path d="M-6 15H6V20L0 29L-6 20Z" fill="#2d8ceb" />
          <path d="M-3 22H3M0 22V29" stroke="#16304a" />
        </g>
      </svg>
    </div>
  );
}

function TimelinePanel() {
  return (
    <section className="flex h-[432px] shrink-0 flex-col bg-[#232323] pb-0.5">
      <div className="flex h-[29px] shrink-0 items-center pl-[7px]">
        <button aria-label="Close timeline" className="mr-2 w-2.5 text-center">×</button>
        <span className="size-2.5 bg-[#a8977a]" />
        <h2 className="mr-[11px] ml-3 text-[#c4c4c4]">Comp 1</h2>
        <button aria-label="Timeline menu" className="text-[#b5b5b5]">
          <MenuIcon />
        </button>
      </div>
      <div className="flex min-h-0 flex-1 pt-[3px]">
        <LayerList />
        <Track />
        <div className="flex w-[17px] shrink-0 flex-col items-center gap-1.5 pt-[33px] text-[#b5b5b5]">
          <Svg className="h-3.5 w-3">
            <path d="M1 0H15V10L8 16L1 10Z" fill="currentColor" stroke="none" />
          </Svg>
          <Svg className="h-3.5 w-4">
            <path d="M8 3H16V12H8Z" fill="currentColor" stroke="none" />
            <path d="M8 0.5L1 8L4 9" strokeWidth="1.6" />
            <circle cx="7" cy="11" r="3.6" fill="#232323" strokeWidth="1.8" />
          </Svg>
        </div>
      </div>
      <div className="flex h-[17px] shrink-0 items-center border-t border-black text-[#b5b5b5]">
        <span className="flex w-[105px] shrink-0 items-center gap-[7px] pl-[6px]">
          <Svg className="size-3 text-[#2d8ceb]">
            <path d="M1 1H9V3M1 1V10H3M4 4H12V6M4 4V13H6M7 7H15V15.5H7ZM11 9V13.5M9 11.2H13" strokeWidth="1.4" />
          </Svg>
          <Svg className="size-3">
            <circle cx="6" cy="6" r="4.6" />
            <path d="M6.5 6.5H15V15H6.5Z" fill="#232323" strokeWidth="1.6" />
          </Svg>
          <Svg className="size-3">
            <path d="M4 0H12L10 5V11L12 16H4L6 11V5ZM1 6.5H15V9.5H1Z" fill="currentColor" stroke="none" />
          </Svg>
          <Svg className="size-3">
            <path d="M0 15V11L3 10C0 6 2 1 6 1C9 1 11 5 9 10L11 11V15ZM12 4L16 3V9L13 12Z" fill="currentColor" stroke="none" />
          </Svg>
        </span>
        <span className="w-[160px] shrink-0">
          Frame Render Time: <b className="ml-0.5 font-medium text-[#6fd6b0]">1ms</b>
        </span>
        <button className="h-4 w-[133px] shrink-0 rounded-[2px] border border-[#333333] leading-[14px] text-[#8f8f8f]">
          Toggle Switches / Modes
        </button>
        <span className="ml-[139px] flex shrink-0 items-center">
          <Svg className="h-1.5 w-3" box="0 0 12 6">
            <path d="M0 6L3 3L4 4L7 0L12 6Z" fill="currentColor" stroke="none" />
          </Svg>
          <input
            type="range"
            aria-label="Timeline zoom"
            defaultValue={62}
            className="mx-3.5 h-3 w-[44px] appearance-none bg-[linear-gradient(#3f3f3f,#3f3f3f)] bg-[length:100%_2px] bg-center bg-no-repeat [&::-webkit-slider-thumb]:size-2.5 [&::-webkit-slider-thumb]:appearance-none [&::-webkit-slider-thumb]:rounded-full [&::-webkit-slider-thumb]:border-2 [&::-webkit-slider-thumb]:border-[#8f8f8f] [&::-webkit-slider-thumb]:bg-[#232323]"
          />
          <Svg className="h-2 w-4" box="0 0 16 8">
            <path d="M0 8L5 2L6 3L3 8ZM4 8L10 0L16 8Z" fill="currentColor" stroke="none" />
          </Svg>
        </span>
        <span className="ml-1.5 h-3.5 min-w-0 flex-1 bg-[#1f1f1f]">
          <span className="block h-3.5 w-[44%] rounded-full bg-[#363636]" />
        </span>
      </div>
    </section>
  );
}

function PanelTitle({ children, menu = true }: { children: ReactNode; menu?: boolean }) {
  return (
    <div className="flex h-[28px] shrink-0 items-center justify-between pr-[10px] pl-3 text-[#c4c4c4]">
      <h2>{children}</h2>
      {menu && (
        <button aria-label="Panel menu">
          <MenuIcon />
        </button>
      )}
    </div>
  );
}

function Rule({ className = 'w-[195px]' }: { className?: string }) {
  return <div className={`h-0.5 shrink-0 bg-[#333333] ${className}`} />;
}

function Num({ value, unit = '' }: { value: string; unit?: string }) {
  return (
    <span className="whitespace-nowrap">
      <button className="text-[#3a86cf]">{value}</button>
      {unit && <span className="ml-1">{unit}</span>}
    </span>
  );
}

function CharacterRow({ icon, left, icon2, right }: { icon: ReactNode; left: ReactNode; icon2: ReactNode; right: ReactNode }) {
  return (
    <div className="grid h-[21px] grid-cols-[25px_45px_35px_33px_45px_16px] items-center">
      <span className="flex text-[#b5b5b5]">{icon}</span>
      {left}
      <Caret />
      <span className="flex text-[#b5b5b5]">{icon2}</span>
      {right}
      <Caret />
    </div>
  );
}

function CharacterPanel() {
  return (
    <div className="h-[301px] shrink-0">
      <PanelTitle>Character</PanelTitle>
      <div className="pt-2 pl-1">
        <div className="flex h-[48px]">
          <div className="flex w-[123px] flex-col gap-[5px]">
            <Select value="Times New Roman" label="Font family" split />
            <Select value="Regular" label="Font style" split />
          </div>
          <div className="ml-1 flex w-5 flex-col items-center gap-[9px]">
            <button aria-label="Eyedropper" className="text-[#b5b5b5]">
              <Eyedropper />
            </button>
            <span className="block h-4 w-5 border border-[#8f8f8f] bg-[linear-gradient(#000_50%,#fff_50%)]" />
          </div>
          <svg viewBox="0 0 44 44" className="ml-[5px] size-11 shrink-0" aria-hidden="true">
            <path d="M13 13H43V43H13ZM23 23V33H33V23Z" fill="#000000" fillRule="evenodd" />
            <rect x="0.5" y="0.5" width="29" height="29" fill="#ebebeb" stroke="#000000" />
            <rect x="1.5" y="31.5" width="10" height="10" fill="#ffffff" stroke="#8f8f8f" />
            <path d="M2 41L11 32" stroke="#c83030" />
            <path d="M32 4C38 4 39 6 39 10M35.5 8.5L39 12.5L42 8.5M34 1L31 4L34 7" stroke="#b5b5b5" strokeWidth="2" fill="none" />
          </svg>
        </div>
        <Rule />
        <CharacterRow
          icon={<b className="font-['Liberation_Serif'] text-[14px] leading-5">T<span className="text-[20px]">T</span></b>}
          left={<Num value="36" unit="px" />}
          icon2={
            <Svg className="h-[18px] w-[18px]">
              <path d="M2 8V15M0.5 9.5L2 7.5L3.5 9.5M0.5 13.5L2 15.5L3.5 13.5M5 7H15.5M5 15.4H15.5M7.5 6L10.2 0.5L13 6M8.4 4H12M7.5 14.4L10.2 9L13 14.4M8.4 12.6H12" />
            </Svg>
          }
          right={<Num value="Auto" />}
        />
        <CharacterRow
          icon={
            <Svg className="h-4 w-[18px]" box="0 0 18 16">
              <path d="M1 1L4.5 9.5L9 1M7 11L11 0M9 10L12.5 1.5L16 10M10.2 7H15M9 13.5H16M11 11.5L9 13.5L11 15.5" strokeWidth="1.3" />
            </Svg>
          }
          left={<span className="text-[#4a4a4a]">Metrics</span>}
          icon2={
            <Svg className="h-4 w-[18px]" box="0 0 18 16">
              <rect width="18" height="11" fill="currentColor" stroke="none" />
              <path d="M2 2L5.5 9L8.5 2M9.5 9.5L12.5 2L16 9.5M10.5 7H15" stroke="#232323" strokeWidth="1.6" />
              <path d="M1 13.8H17M3 12L1 13.8L3 15.6M15 12L17 13.8L15 15.6" />
            </Svg>
          }
          right={<Num value="0" />}
        />
        <div className="mt-[5px]">
          <Rule />
        </div>
        <div className="flex h-7 items-center">
          <span className="w-[25px] pl-0.5 text-[#b5b5b5]">
            <Svg className="h-3 w-3.5">
              <path d="M0 1.5H16M0 7.5H16M0 13.8H16" strokeWidth="2.2" />
            </Svg>
          </span>
          <span className="w-[45px]">
            <Num value="1" unit="px" />
          </span>
          <Caret />
          <Select value="Fill Over Stroke" label="Stroke order" className="ml-1 h-[19px] w-[115px]" />
        </div>
        <Rule />
        <div className="pt-[3px]">
          <CharacterRow
            icon={
              <span className="flex font-['Liberation_Serif'] text-[20px] leading-5">
                <Svg className="mt-[3px] h-3.5 w-1.5" box="0 0 6 14">
                  <path d="M3 1V13M0.5 3.5L3 1L5.5 3.5M0.5 10.5L3 13L5.5 10.5" />
                </Svg>
                <b>T</b>
              </span>
            }
            left={<Num value="100" unit="%" />}
            icon2={
              <span className="flex w-4 flex-col items-center font-['Liberation_Serif'] text-[17px] leading-[13px]">
                <b>T</b>
                <Svg className="h-1.5 w-4" box="0 0 16 6">
                  <path d="M1 3H15M3 0.5L1 3L3 5.5M13 0.5L15 3L13 5.5" />
                </Svg>
              </span>
            }
            right={<Num value="100" unit="%" />}
          />
          <CharacterRow
            icon={
              <Svg className="h-3.5 w-4">
                <path d="M0 13H8M1.5 11.5L4.5 3L7.5 11.5M2.5 8.5H6.5M10 10.5H15M12.5 16V12.5M11 14L12.5 12L14 14" strokeWidth="1.3" />
                <circle cx="12" cy="6.4" r="1.8" />
                <path d="M10.4 3.2H14V8.6" />
              </Svg>
            }
            left={<Num value="0" unit="px" />}
            icon2={
              <span className="flex w-4 flex-col items-center text-[10px] leading-[11px]">
                <span className="border-x border-dotted border-[#8f8f8f]">あ</span>
                <Svg className="h-1 w-4" box="0 0 16 4">
                  <path d="M0 2H5M3.5 0.5L5 2L3.5 3.5M16 2H11M12.5 0.5L11 2L12.5 3.5" />
                </Svg>
              </span>
            }
            right={<Num value="0" unit="%" />}
          />
        </div>
        <div className="mt-1.5">
          <Rule />
        </div>
        <div className="flex h-[30px] items-center pl-[26px] font-['Liberation_Serif'] text-[17px] text-[#b5b5b5]">
          <button aria-label="Faux bold" className="w-[26px] text-left font-bold">T</button>
          <button aria-label="Faux italic" className="w-[25px] text-left italic">T</button>
          <button aria-label="All caps" className="w-[25px] text-left text-[15px]">TT</button>
          <button aria-label="Small caps" className="w-[32px] text-left">T<span className="text-[12px]">T</span></button>
          <button aria-label="Superscript" className="w-[25px] text-left">T<sup className="text-[9px]">1</sup></button>
          <button aria-label="Subscript" className="text-left">T<sub className="text-[9px]">1</sub></button>
        </div>
        <div className="mt-[3px] flex pl-1.5">
          <Check label="Ligatures" className="w-[98px]" />
          <Check label="Hindi Digits" />
        </div>
      </div>
    </div>
  );
}

function SketchRow({ label, children, className = 'h-[19px]' }: { label: string; children: ReactNode; className?: string }) {
  return (
    <div className={`flex items-center ${className}`}>
      <span className="mr-[5px] w-[107px] text-right">{label}</span>
      {children}
    </div>
  );
}

function MotionSketchPanel() {
  return (
    <div className="h-[181px] shrink-0">
      <PanelTitle>Motion Sketch</PanelTitle>
      <div className="pt-2">
        <SketchRow label="Capture speed at:">
          <Num value="100" unit="%" />
        </SketchRow>
        <SketchRow label="Smoothing:">
          <Num value="1" />
        </SketchRow>
        <SketchRow label="Show:">
          <Check label="Wireframe" checked />
        </SketchRow>
        <SketchRow label="">
          <Check label="Background" />
        </SketchRow>
        <SketchRow label="Start:">0;00;00;00</SketchRow>
        <SketchRow label="Duration:" className="h-[15px]">0;00;06;00</SketchRow>
        <button className="mt-2 ml-[103px] h-5 w-[92px] rounded-full border border-[#8f8f8f] leading-4">Start Capture</button>
      </div>
    </div>
  );
}

function MaskPanel() {
  return (
    <div className="h-[302px] shrink-0">
      <PanelTitle>Mask Interpolation</PanelTitle>
      <div className="px-0.5">
        <div className="flex h-7 items-center pl-0.5">
          <span className="w-[81px]">Keyframe Rate:</span>
          <Select value="(29.97)" label="Keyframe rate" className="h-[19px] w-[70px]" split />
          <span className="ml-1">per second</span>
        </div>
        <Check label="Keyframe Fields (doubles rate)" />
        <Check label="Use Linear Vertex Paths" checked className="mt-1" />
        <Rule className="mt-1.5 w-[202px]" />
        <SketchRow label="Bending Resistance:" className="h-[21px]">
          <Num value="50" unit="%" />
        </SketchRow>
        <SketchRow label="Quality:" className="h-[22px]">
          <Num value="50" unit="%" />
        </SketchRow>
        <Rule className="mt-[3px] w-[202px]" />
        <Check label="Add Mask Path Vertices" checked className="mt-1.5" />
        <div className="mt-1 flex items-center pl-1.5">
          <span className="w-9">
            <Num value="9" />
          </span>
          <Select value="Pixels Between Vertices" label="Vertex spacing" className="h-[19px] w-[160px]" />
        </div>
        <Rule className="mt-[5px] w-[202px]" />
        <div className="mt-1.5 flex items-center pl-0.5">
          <span className="w-[99px]">Matching Method:</span>
          <Select value="Auto" label="Matching method" className="h-[19px] w-[101px]" />
        </div>
        <Check label="Use 1:1 Vertex Matches" className="mt-[5px]" />
        <Check label="First Vertices Match" checked className="mt-[3px]" />
        <Rule className="mt-1.5 w-[202px]" />
        <button className="mt-[3px] ml-[146px] h-5 w-[60px] rounded-full border border-[#8f8f8f] leading-4">Apply</button>
      </div>
    </div>
  );
}

function Field({ children }: { children: ReactNode }) {
  return (
    <button className="mr-[11px] h-[18px] w-[39px] border-b border-[#5a5a5a] pl-0.5 text-left leading-4 whitespace-nowrap text-[#3a86cf]">
      {children}
    </button>
  );
}

function TransformRow({ label, lead = <Stopwatch />, linked = false, children }: { label: string; lead?: ReactNode; linked?: boolean; children: ReactNode }) {
  return (
    <div className="flex h-5 items-center pl-[10px]">
      <span className="flex w-[49px] justify-center pr-[13px] text-[#b5b5b5]">{lead}</span>
      <span className="w-[68px]">{label}</span>
      <span className="w-[22px] text-[#3a86cf]">{linked && <Link />}</span>
      {children}
    </div>
  );
}

function PropertiesPanel() {
  return (
    <div className="shrink-0">
      <PanelTitle>Properties: Shape Layer 1</PanelTitle>
      <div className="flex h-5 items-center pl-[11px]">
        <h3 className="w-[141px]">Layer Transform</h3>
        <Reset />
      </div>
      <TransformRow label="Anchor Point">
        <Field>-91</Field>
        <Field>-23</Field>
      </TransformRow>
      <TransformRow
        label="Position"
        lead={
          <Svg className="-mx-3 h-3 w-[36px]" box="0 0 36 12">
            <path d="M7 2V10L2 6Z" fill="#b5b5b5" stroke="none" />
            <path d="M18 1L23 6L18 11L13 6Z" fill="#2d8ceb" stroke="none" />
            <path d="M29 2V10L34 6Z" fill="#555555" stroke="none" />
          </Svg>
        }
      >
        <Field>346</Field>
        <Field>628</Field>
      </TransformRow>
      <TransformRow label="Scale" linked>
        <Field>100<Unit>%</Unit></Field>
        <Field>100<Unit>%</Unit></Field>
      </TransformRow>
      <TransformRow label="Rotation">
        <Field>0<Unit>x</Unit>+0<Unit>°</Unit></Field>
      </TransformRow>
      <TransformRow label="Opacity">
        <Field>100<Unit>%</Unit></Field>
      </TransformRow>
      <div className="mx-[10px] mt-1 h-0.5 bg-[#161616]" />
      <h3 className="mt-1 h-[28px] pl-[11px] leading-6">Layer Contents</h3>
      <ul className="mr-[9px] ml-[10px] h-[150px] bg-[#1e1e1e] pt-px">
        <li className="mb-px flex h-[19px] items-center text-[#b5b5b5]">
          <span className="flex w-6 justify-center">
            <Eye />
          </span>
          <button className="flex h-full flex-1 items-center gap-2 bg-[#9e9e9e] pl-1.5 text-[#333333]">
            <Star />
            Shape Layer 1
          </button>
        </li>
        <li className="flex h-[19px] items-center text-[#b5b5b5]">
          <span className="flex w-6 justify-center">
            <Eye />
          </span>
          <button className="flex h-full flex-1 items-center gap-2 bg-[#4a4a4a] pl-[30px]">
            <Star />
            <span className="text-[#8f8f8f]">Ellipse 1</span>
          </button>
        </li>
      </ul>
      <div className="mx-[10px] mt-[11px] h-0.5 bg-[#161616]" />
      <div className="flex h-[30px] items-center pl-[11px]">
        <h3 className="w-[141px]">Shape Properties</h3>
        <Reset />
      </div>
      <TransformRow label="Size" linked>
        <Field>132</Field>
        <Field>132</Field>
      </TransformRow>
      <TransformRow label="Stroke Color">
        <span className="size-4 bg-white" />
        <button aria-label="Pick stroke color" className="mx-[6px] text-[#b5b5b5]">
          <Eyedropper />
        </button>
        <Select value="Solid Color" label="Stroke type" className="h-[19px] w-[90px]" />
      </TransformRow>
      <TransformRow label="Stroke Width">
        <Field>2</Field>
      </TransformRow>
    </div>
  );
}

function SidePanels() {
  const collapsed = ['Align', 'Audio', 'Effects & Presets'];

  return (
    <aside className="flex w-[313px] shrink-0 flex-col gap-1 pl-px">
      <section className="h-14 shrink-0 bg-[#232323]">
        <div className="flex h-7 items-center gap-[11px] pl-3 text-[#d0d0d0]">
          <h2>Preview</h2>
          <MenuIcon />
        </div>
        <div className="flex h-[27px] items-center gap-3 pl-[46px] text-[#b5b5b5]">
          <button aria-label="First frame">
            <Svg className="size-3">
              <path d="M1 1H3.5V15H1ZM15 1V15L4.5 8Z" fill="currentColor" stroke="none" />
            </Svg>
          </button>
          <button aria-label="Previous frame">
            <Svg className="size-3">
              <path d="M13 1H15.5V15H13ZM11 1V15L0.5 8Z" fill="currentColor" stroke="none" />
            </Svg>
          </button>
          <button aria-label="Play">
            <Svg className="size-3">
              <path d="M2 0.5V15.5L14 8Z" fill="currentColor" stroke="none" />
            </Svg>
          </button>
          <button aria-label="Next frame">
            <Svg className="size-3">
              <path d="M0.5 1H3V15H0.5ZM5 1V15L15.5 8Z" fill="currentColor" stroke="none" />
            </Svg>
          </button>
          <button aria-label="Last frame">
            <Svg className="size-3">
              <path d="M12.5 1H15V15H12.5ZM1 1V15L11.5 8Z" fill="currentColor" stroke="none" />
            </Svg>
          </button>
        </div>
      </section>
      <div className="flex min-h-0 flex-1 overflow-hidden bg-[#232323] pb-px">
        <div className="flex min-w-0 flex-1 flex-col gap-0.5 overflow-hidden bg-[#161616] [&>*]:bg-[#232323]">
          {collapsed.map((name) => (
            <PanelTitle key={name} menu={false}>
              <span className="text-[#8f8f8f]">{name}</span>
            </PanelTitle>
          ))}
          <CharacterPanel />
          <MotionSketchPanel />
          <MaskPanel />
          <PropertiesPanel />
        </div>
        <div className="w-[14px] shrink-0 bg-[#1b1b1b] px-0.5">
          <div className="h-[83%] w-[10px] rounded-full bg-[#333333]" />
        </div>
      </div>
    </aside>
  );
}

export default function App() {
  return (
    <div className="flex h-screen flex-col overflow-hidden bg-[#161616] font-['Noto_Sans_CJK_SC','Noto_Sans',sans-serif] text-[11px] leading-4 whitespace-nowrap text-[#8f8f8f]">
      <TitleBar />
      <ToolBar />
      <main className="flex min-h-0 flex-1 gap-1 pt-0.5">
        <div className="flex min-w-0 flex-1 flex-col gap-1">
          <div className="flex min-h-0 flex-1 gap-[3px]">
            <ProjectPanel />
            <CompositionPanel />
          </div>
          <TimelinePanel />
        </div>
        <SidePanels />
      </main>
    </div>
  );
}
